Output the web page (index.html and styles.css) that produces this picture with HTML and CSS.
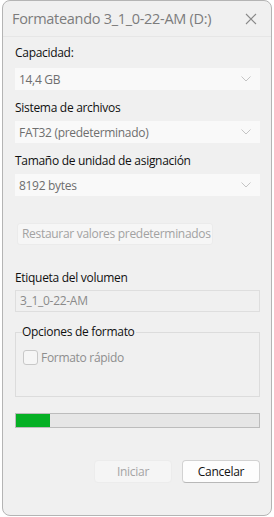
FILE: index.html
```html
<!DOCTYPE html>
<html>
<head>
<meta charset="utf-8">
<link rel="stylesheet" href="styles.css">
</head>
<body>
<div class="window">
  <div class="titlebar">
    <span class="title">Formateando 3_1_0-22-AM (D:)</span>
    <svg class="close" width="12" height="12" viewBox="0 0 12 12"><path d="M1 1 L11 11 M11 1 L1 11" stroke="#8a8a8a" stroke-width="1.1" fill="none"/></svg>
  </div>
  <div class="content">
    <div class="label l1">Capacidad:</div>
    <div class="select"><span>14,4 GB</span><svg class="chev" width="10" height="6" viewBox="0 0 10 6"><path d="M0.5 0.5 L5 5 L9.5 0.5" stroke="#c4c4c4" stroke-width="1" fill="none"/></svg></div>
    <div class="label l2">Sistema de archivos</div>
    <div class="select"><span>FAT32 (predeterminado)</span><svg class="chev" width="10" height="6" viewBox="0 0 10 6"><path d="M0.5 0.5 L5 5 L9.5 0.5" stroke="#c4c4c4" stroke-width="1" fill="none"/></svg></div>
    <div class="label l2">Tamaño de unidad de asignación</div>
    <div class="select"><span>8192 bytes</span><svg class="chev" width="10" height="6" viewBox="0 0 10 6"><path d="M0.5 0.5 L5 5 L9.5 0.5" stroke="#c4c4c4" stroke-width="1" fill="none"/></svg></div>
    <div class="restore">Restaurar valores predeterminados</div>
    <div class="label l3">Etiqueta del volumen</div>
    <div class="input">3_1_0-22-AM</div>
    <fieldset class="group">
      <legend>Opciones de formato</legend>
      <div class="check"><span class="box"></span><span class="ctext">Formato rápido</span></div>
    </fieldset>
    <div class="progress"><div class="fill" style="width:34px"></div></div>
    <div class="buttons">
      <div class="btn disabled">Iniciar</div>
      <div class="btn primary">Cancelar</div>
    </div>
  </div>
</div>
</body>
</html>
```
FILE: styles.css
```css
html, body {
  margin: 0;
  padding: 0;
  background: #ffffff;
}
body {
  font-family: "Open Sans", "Noto Sans", sans-serif;
  font-size: 12px;
  letter-spacing: -0.3px;
  white-space: nowrap;
}
.window {
  margin-left: 2px;
  width: 268px;
  height: 514px;
  background: #f0f0f0;
  border: 1px solid #b4b4b4;
  border-radius: 8px;
  display: flex;
  flex-direction: column;
  overflow: hidden;
}
.titlebar {
  height: 35px;
  display: flex;
  align-items: center;
  justify-content: space-between;
  padding: 0 14px 0 9px;
  border-bottom: 1px solid #e6e6e6;
}
.title {
  font-size: 14.5px;
  color: #7c7c7c;
  letter-spacing: -0.3px;
}
.close {
  display: block;
}
.content {
  padding: 0 11px 0 12px;
  display: flex;
  flex-direction: column;
}
.label {
  line-height: 16px;
  height: 16px;
  color: #111;
}
.l1 { margin-top: 8px; margin-bottom: 7px; }
.l2 { margin-top: 10px; margin-bottom: 5px; }
.l3 { margin-top: 25px; margin-bottom: 4px; }
.select {
  height: 22px;
  background: #f9f9f9;
  display: flex;
  align-items: center;
  justify-content: space-between;
  padding: 0 9px 0 4px;
  color: #6e6e6e;
}
.chev { display: block; }
.restore {
  margin-top: 27px;
  margin-left: 2px;
  width: 196px;
  height: 22px;
  box-sizing: border-box;
  background: #f6f6f6;
  border: 1px solid #ebebeb;
  border-radius: 3px;
  color: #a2a2a2;
  line-height: 20px;
  padding-left: 4px;
}
.input {
  height: 22px;
  box-sizing: border-box;
  border: 1px solid #dedede;
  line-height: 20px;
  padding-left: 4px;
  color: #8a8a8a;
}
.group {
  margin: 12px 0 0 0;
  padding: 0 0 0 7px;
  height: 73px;
  box-sizing: border-box;
  border: 1px solid #dcdcdc;
  border-radius: 0;
  min-width: 0;
}
.group legend {
  padding: 0 1px 0 0;
  color: #111;
  line-height: 16px;
  margin-left: -1px;
}
.check {
  margin-top: 9px;
  display: flex;
  align-items: center;
  gap: 3px;
}
.box {
  width: 13px;
  height: 13px;
  border: 1px solid #c8c8c8;
  border-radius: 3px;
  background: #f6f6f6;
}
.ctext {
  color: #8e8e8e;
}
.progress {
  margin-top: 16px;
  height: 15px;
  box-sizing: border-box;
  border: 1px solid #bcbcbc;
  background: #e6e6e6;
}
.fill {
  height: 100%;
  background: #06b025;
}
.buttons {
  margin-top: 32px;
  display: flex;
  justify-content: flex-end;
  gap: 10px;
}
.btn {
  width: 78px;
  height: 23px;
  box-sizing: border-box;
  border-radius: 4px;
  text-align: center;
  line-height: 21px;
}
.disabled {
  background: #f5f5f5;
  border: 1px solid #ececec;
  color: #a4a4a4;
}
.primary {
  background: #fdfdfd;
  border: 1px solid #d2d2d2;
  border-bottom-color: #b8b8b8;
  color: #111;
}
```
